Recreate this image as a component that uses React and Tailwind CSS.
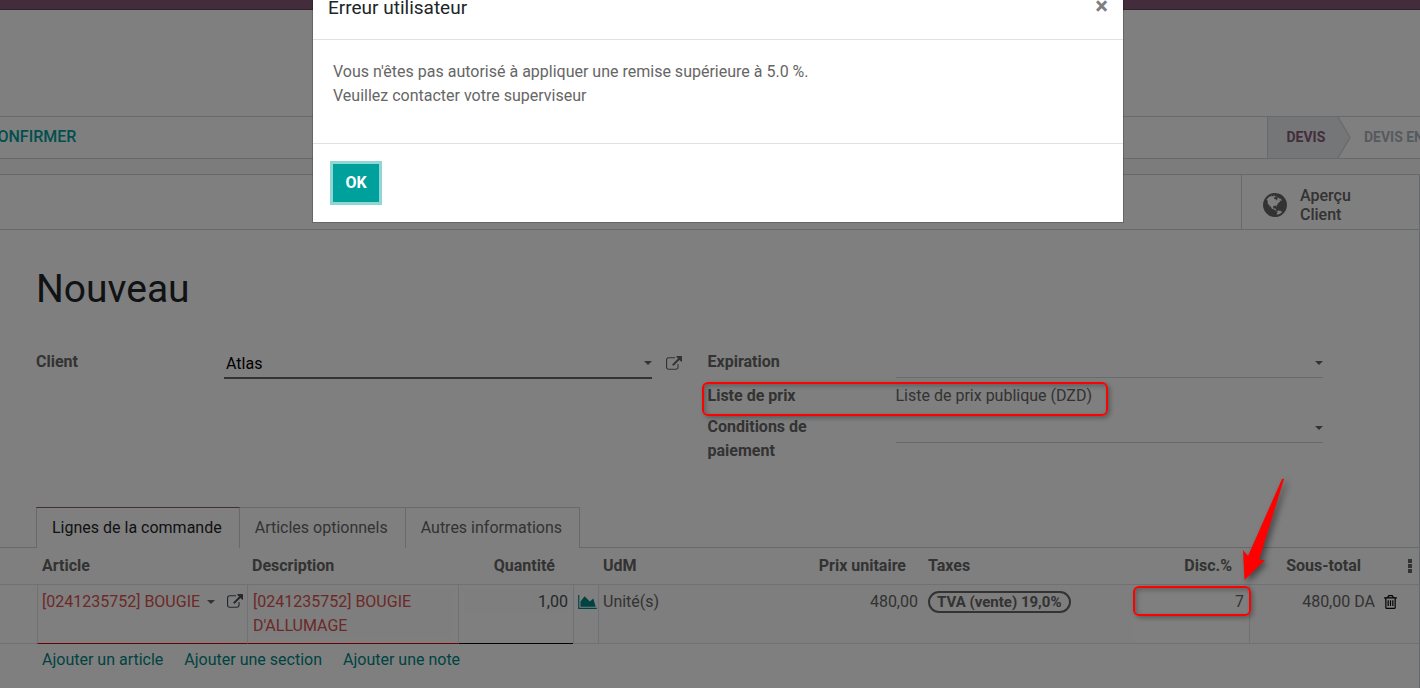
const GLOBE =
  'M896 128q209 0 385.5 103t279.5 279.5 103 385.5-103 385.5-279.5 279.5-385.5 103-385.5-103-279.5-279.5-103-385.5 103-385.5 279.5-279.5 385.5-103zm274 521q-2 1-9.5 9.5t-13.5 9.5q2 0 4.5-5t5-11 3.5-7q6-7 22-15 14-6 52-12 34-8 51 11-2-2 9.5-13t14.5-12q3-2 15-4.5t15-7.5l2-22q-12 1-17.5-7t-6.5-21q0 2-6 8 0-7-4.5-8t-11.5 1-9 1q-10-3-15-7.5t-8-16.5-4-15q-2-5-9.5-11t-9.5-10q-1-2-2.5-5.5t-3-6.5-4-5.5-5.5-2.5-7 5-7.5 10-4.5 5q-3-2-6-1.5t-4.5 1-4.5 3-5 3.5q-3 2-8.5 3t-8.5 2q15-5-1-11-10-4-16-3 9-4 7.5-12t-8.5-14h5q-1-4-8.5-8.5t-17.5-8.5-13-6q-8-5-34-9.5t-33-.5q-5 6-4.5 10.5t4 14 3.5 12.5q1 6-5.5 13t-6.5 12q0 7 14 15.5t10 21.5q-3 8-16 16t-16 12q-5 8-1.5 18.5t10.5 16.5q2 2 1.5 4t-3.5 4.5-5.5 4-6.5 3.5l-3 2q-11 5-20.5-6t-13.5-26q-7-25-16-30-23-8-29 1-5-13-41-26-25-9-58-4 6-1 0-15-7-15-19-12 3-6 4-17.5t1-13.5q3-13 12-23 1-1 7-8.5t9.5-13.5.5-6q35 4 50-11 5-5 11.5-17t10.5-17q9-6 14-5.5t14.5 5.5 14.5 5q14 1 15.5-11t-7.5-20q12 1 3-17-4-7-8-9-12-4-27 5-8 4 2 8-1-1-9.5 10.5t-16.5 17.5-16-5q-1-1-5.5-13.5t-9.5-13.5q-8 0-16 15 3-8-11-15t-24-8q19-12-8-27-7-4-20.5-5t-19.5 4q-5 7-5.5 11.5t5 8 10.5 5.5 11.5 4 8.5 3q14 10 8 14-2 1-8.5 3.5t-11.5 4.5-6 4q-3 4 0 14t-2 14q-5-5-9-17.5t-7-16.5q7 9-25 6l-10-1q-4 0-16 2t-20.5 1-13.5-8q-4-8 0-20 1-4 4-2-4-3-11-9.5t-10-8.5q-46 15-94 41 6 1 12-1 5-2 13-6.5t10-5.5q34-14 42-7l5-5q14 16 20 25-7-4-30-1-20 6-22 12 7 12 5 18-4-3-11.5-10t-14.5-11-15-5q-16 0-22 1-146 80-235 222 7 7 12 8 4 1 5 9t2.5 11 11.5-3q9 8 3 19 1-1 44 27 19 17 21 21 3 11-10 18-1-2-9-9t-9-4q-3 5 .5 18.5t10.5 12.5q-7 0-9.5 16t-2.5 35.5-1 23.5l2 1q-3 12 5.5 34.5t21.5 19.5q-13 3 20 43 6 8 8 9 3 2 12 7.5t15 10 10 10.5q4 5 10 22.5t14 23.5q-2 6 9.5 20t10.5 23q-1 0-2.5 1t-2.5 1q3 7 15.5 14t15.5 13q1 3 2 10t3 11 8 2q2-20-24-62-15-25-17-29-3-5-5.5-15.5t-4.5-14.5q2 0 6 1.5t8.5 3.5 7.5 4 2 3q-3 7 2 17.5t12 18.5 17 19 12 13q6 6 14 19.5t0 13.5q9 0 20 10.5t17 19.5q5 8 8 26t5 24q2 7 8.5 13.5t12.5 9.5l16 8 13 7q5 2 18.5 10.5t21.5 11.5q10 4 16 4t14.5-2.5 13.5-3.5q15-2 29 15t21 21q36 19 55 11-2 1 .5 7.5t8 15.5 9 14.5 5.5 8.5q5 6 18 15t18 15q6-4 7-9-3 8 7 20t18 10q14-3 14-32-31 15-49-18 0-1-2.5-5.5t-4-8.5-2.5-8.5 0-7.5 5-3q9 0 10-3.5t-2-12.5-4-13q-1-8-11-20t-12-15q-5 9-16 8t-16-9q0 1-1.5 5.5t-1.5 6.5q-13 0-15-1 1-3 2.5-17.5t3.5-22.5q1-4 5.5-12t7.5-14.5 4-12.5-4.5-9.5-17.5-2.5q-19 1-26 20-1 3-3 10.5t-5 11.5-9 7q-7 3-24 2t-24-5q-13-8-22.5-29t-9.5-37q0-10 2.5-26.5t3-25-5.5-24.5q3-2 9-9.5t10-10.5q2-1 4.5-1.5t4.5 0 4-1.5 3-6q-1-1-4-3-3-3-4-3 7 3 28.5-1.5t27.5 1.5q15 11 22-2 0-1-2.5-9.5t-.5-13.5q5 27 29 9 3 3 15.5 5t17.5 5q3 2 7 5.5t5.5 4.5 5-.5 8.5-6.5q10 14 12 24 11 40 19 44 7 3 11 2t4.5-9.5 0-14-1.5-12.5l-1-8v-18l-1-8q-15-3-18.5-12t1.5-18.5 15-18.5q1-1 8-3.5t15.5-6.5 12.5-8q21-19 15-35 7 0 11-9-1 0-5-3t-7.5-5-4.5-2q9-5 2-16 5-3 7.5-11t7.5-10q9 12 21 2 7-8 1-16 5-7 20.5-10.5t18.5-9.5q7 2 8-2t1-12 3-12q4-5 15-9t13-5l17-11q3-4 0-4 18 2 31-11 10-11-6-20 3-6-3-9.5t-15-5.5q3-1 11.5-.5t10.5-1.5q15-10-7-16-17-5-43 12zm-163 877q206-36 351-189-3-3-12.5-4.5t-12.5-3.5q-18-7-24-8 1-7-2.5-13t-8-9-12.5-8-11-7q-2-2-7-6t-7-5.5-7.5-4.5-8.5-2-10 1l-3 1q-3 1-5.5 2.5t-5.5 3-4 3 0 2.5q-21-17-36-22-5-1-11-5.5t-10.5-7-10-1.5-11.5 7q-5 5-6 15t-2 13q-7-5 0-17.5t2-18.5q-3-6-10.5-4.5t-12 4.5-11.5 8.5-9 6.5-8.5 5.5-8.5 7.5q-3 4-6 12t-5 11q-2-4-11.5-6.5t-9.5-5.5q2 10 4 35t5 38q7 31-12 48-27 25-29 40-4 22 12 26 0 7-8 20.5t-7 21.5q0 6 2 16z';

const EXTERNAL =
  'M1408 928v320q0 119-84.5 203.5t-203.5 84.5h-832q-119 0-203.5-84.5t-84.5-203.5v-832q0-119 84.5-203.5t203.5-84.5h704q14 0 23 9t9 23v64q0 14-9 23t-23 9h-704q-66 0-113 47t-47 113v832q0 66 47 113t113 47h832q66 0 113-47t47-113v-320q0-14 9-23t23-9h64q14 0 23 9t9 23zm384-864v512q0 26-19 45t-45 19-45-19l-176-176-652 652q-10 10-23 10t-23-10l-114-114q-10-10-10-23t10-23l652-652-176-176q-19-19-19-45t19-45 45-19h512q26 0 45 19t19 45z';

const TRASH =
  'M704 736v576q0 14-9 23t-23 9h-64q-14 0-23-9t-9-23v-576q0-14 9-23t23-9h64q14 0 23 9t9 23zm256 0v576q0 14-9 23t-23 9h-64q-14 0-23-9t-9-23v-576q0-14 9-23t23-9h64q14 0 23 9t9 23zm256 0v576q0 14-9 23t-23 9h-64q-14 0-23-9t-9-23v-576q0-14 9-23t23-9h64q14 0 23 9t9 23zm128 724v-948h-896v948q0 22 7 40.5t14.5 27 10.5 8.5h832q3 0 10.5-8.5t14.5-27 7-40.5zm-672-1076h448l-48-117q-7-9-17-11h-317q-10 2-17 11zm928 32v64q0 14-9 23t-23 9h-96v948q0 83-47 143.5t-113 60.5h-832q-66 0-113-58.5t-47-141.5v-952h-96q-14 0-23-9t-9-23v-64q0-14 9-23t23-9h309l70-167q15-37 54-63t79-26h320q40 0 79 26t54 63l70 167h309q14 0 23 9t9 23z';

function ExternalLinkIcon() {
  return (
    <svg viewBox="0 0 1792 1664" className="h-[15px] w-4 fill-current" aria-hidden="true">
      <path d={EXTERNAL} />
    </svg>
  );
}

function Caret() {
  return (
    <svg viewBox="0 0 8 4" className="h-1 w-2 shrink-0 fill-[#666]" aria-hidden="true">
      <path d="M0 0h8L4 4z" />
    </svg>
  );
}

function Highlight({ className }) {
  return (
    <span
      aria-hidden="true"
      className={`pointer-events-none absolute z-20 rounded-md border-2 border-[#ff0000] shadow-[2px_2px_5px_rgba(0,0,0,0.3),inset_2px_2px_5px_rgba(0,0,0,0.25)] ${className}`}
    />
  );
}

function StatusBar() {
  return (
    <div className="flex h-[43px] items-stretch justify-between overflow-hidden border-y border-[#ced4da] bg-white">
      <button type="button" className="-ml-[13px] pb-[2px] font-medium text-[#00a09d]">
        CONFIRMER
      </button>
      <div className="-mr-1 flex text-sm">
        <button type="button" className="relative w-[71px] border-l border-[#ced4da] bg-[#e9ecef] pr-[6px] pb-[2px] pl-3 font-bold text-[#875a7b]">
          DEVIS
          <svg viewBox="0 0 13 41" className="absolute top-0 left-full h-full w-[13px]" aria-hidden="true">
            <path d="M0 0L12 20.500 0 41z" fill="#e9ecef" />
            <path d="M0 0L12 20.500 0 41" fill="none" stroke="#d5d9dd" strokeWidth="1.500" />
          </svg>
        </button>
        <button type="button" className="pb-[2px] pl-[26px] font-bold whitespace-nowrap text-[#adb5bd]">
          DEVIS EN
        </button>
      </div>
    </div>
  );
}

const labelClass = 'w-[188px] shrink-0 pt-px pr-12 font-bold text-[#666]';

function FieldGroups() {
  return (
    <div className="mt-[37px] grid grid-cols-2 pr-10 pl-9">
      <div>
        <div className="flex">
          <label htmlFor="client" className={labelClass}>
            Client
          </label>
          <div className="flex flex-1 items-center border-b-2 border-[#666] pl-[2px]">
            <input id="client" defaultValue="Atlas" className="h-7 w-full min-w-0 bg-transparent text-black outline-none" />
            <Caret />
          </div>
          <button type="button" aria-label="Ouvrir le client" className="flex h-7 w-14 items-center pl-[14px] text-[#666]">
            <ExternalLinkIcon />
          </button>
        </div>
      </div>
      <div>
        <div className="mr-14 flex">
          <label htmlFor="expiration" className={labelClass}>
            Expiration
          </label>
          <div className="flex flex-1 items-center border-b border-[#ced4da]">
            <input id="expiration" className="h-7 w-full min-w-0 bg-transparent outline-none" />
            <Caret />
          </div>
        </div>
        <div className="relative mt-[5px] mr-14 flex pb-px">
          <span className={labelClass}>Liste de prix</span>
          <span className="pt-px text-[#666]">Liste de prix publique (DZD)</span>
          <Highlight className="-top-px -left-[6px] h-[34px] w-[406px]" />
        </div>
        <div className="mt-[5px] mr-14 flex items-start">
          <label htmlFor="conditions" className={labelClass}>
            Conditions de paiement
          </label>
          <div className="flex flex-1 items-center border-b border-[#ced4da]">
            <input id="conditions" className="h-7 w-full min-w-0 bg-transparent outline-none" />
            <Caret />
          </div>
        </div>
      </div>
    </div>
  );
}

function Tabs() {
  return (
    <div role="tablist" className="mt-11 flex">
      <div className="w-9 border-b border-[#ced4da]" />
      <button
        type="button"
        role="tab"
        aria-selected="true"
        className="h-[41px] border-x border-t border-x-[#ced4da] border-t-[#875a7b] pr-[17px] pl-[15px] text-[#1f2429]"
      >
        Lignes de la commande
      </button>
      <button type="button" role="tab" aria-selected="false" className="h-[41px] border-t border-r border-[#ced4da] pr-[17px] pl-[15px] text-[#666]">
        Articles optionnels
      </button>
      <button type="button" role="tab" aria-selected="false" className="h-[41px] border-t border-r border-[#ced4da] pr-[17px] pl-[15px] text-[#666]">
        Autres informations
      </button>
      <div className="flex-1 border-b border-[#ced4da]" />
    </div>
  );
}

function OrderLines() {
  return (
    <table className="w-full table-fixed border-separate border-spacing-0 text-[#666]">
      <colgroup>
        <col className="w-[37px]" />
        <col className="w-[210px]" />
        <col className="w-[211px]" />
        <col className="w-[115px]" />
        <col className="w-[25px]" />
        <col />
        <col className="w-[125px]" />
        <col className="w-[210px]" />
        <col className="w-[117px]" />
        <col className="w-[129px]" />
        <col className="w-[22px]" />
        <col className="w-[18px]" />
      </colgroup>
      <thead>
        <tr className="h-[37px] text-left [&>*]:border-b [&>*]:border-[#dee2e6]">
          <td />
          <th className="px-[5px]">Article</th>
          <th className="px-[5px]">Description</th>
          <th className="pr-[18px] text-right">Quantité</th>
          <td />
          <th className="px-[5px]">UdM</th>
          <th className="pr-[17px] text-right whitespace-nowrap">Prix unitaire</th>
          <th className="px-[5px]">Taxes</th>
          <th className="pr-[18px] text-right">Disc.%</th>
          <th className="pr-[18px] text-right">Sous-total</th>
          <td />
          <th>
            <button type="button" aria-label="Colonnes optionnelles" className="flex w-full justify-center">
              <svg viewBox="0 0 4 14" className="h-[14px] w-1 fill-[#666]" aria-hidden="true">
                <path d="M0 0h4v4H0zM0 5h4v4H0zM0 10h4v4H0z" />
              </svg>
            </button>
          </th>
        </tr>
      </thead>
      <tbody>
        <tr className="h-[59px] align-top [&>td]:border-b [&>td]:border-b-[#dee2e6] [&>td]:pt-[5px]">
          <td />
          <td className="border-l border-l-[#dee2e6] px-1 !border-b-[#d00000]">
            <div className="flex items-center text-[#d9534f]">
              <input
                aria-label="Article"
                defaultValue="[0241235752] BOUGIE"
                className="h-6 w-[165px] min-w-0 bg-transparent outline-none"
              />
              <Caret />
              <button type="button" aria-label="Ouvrir l'article" className="ml-3 pb-[2px] text-[#495057]">
                <ExternalLinkIcon />
              </button>
            </div>
          </td>
          <td className="border-l border-l-[#dee2e6] px-[5px] !border-b-[#d00000]">
            <textarea
              aria-label="Description"
              rows={2}
              defaultValue={"[0241235752] BOUGIE\nD'ALLUMAGE"}
              className="block h-12 w-full resize-none overflow-hidden bg-[#fcfcfc] text-[#d9534f] outline-none"
            />
          </td>
          <td className="border-l border-l-[#dee2e6] px-[5px] !border-b-black">
            <input
              aria-label="Quantité"
              defaultValue="1,00"
              className="h-6 w-full bg-[#fcfcfc] text-right text-[#495057] outline-none"
            />
          </td>
          <td className="border-l border-l-[#dee2e6]">
            <button type="button" aria-label="Prévisions" className="flex h-6 items-center pl-1">
              <svg viewBox="0 128 2048 1536" className="h-[14px] w-[19px] fill-[#008784]" aria-hidden="true">
                <path d="M2048 1536v128h-2048v-1536h128v1408h1920zm-384-1024l256 896h-1664v-576l448-576 576 576z" />
              </svg>
            </button>
          </td>
          <td className="border-l border-l-[#dee2e6] bg-[#fcfcfc] px-1">Unité(s)</td>
          <td className="bg-[#fcfcfc] px-[5px] text-right">480,00</td>
          <td className="bg-[#fcfcfc] px-[5px]">
            <span className="mt-px inline-flex h-[22px] items-center rounded-full border-2 border-[#666] px-[7px] text-[15px] font-bold whitespace-nowrap">
              TVA (vente) 19,0%
            </span>
          </td>
          <td className="relative border-r border-r-[#dee2e6] px-[5px]">
            <input aria-label="Remise" defaultValue="7" className="h-6 w-full bg-transparent text-right outline-none" />
            <Highlight className="top-px -right-[2px] h-[30px] w-[118px]" />
            <svg
              viewBox="0 0 40 110"
              className="pointer-events-none absolute -right-9 bottom-[58px] z-20 h-[110px] w-10 overflow-visible drop-shadow-[3px_3px_3px_rgba(0,0,0,0.45)]"
              aria-hidden="true"
            >
              <path d="M-0.500 105L-2 75l5 6L37 4q1-1 2 0L14 85h6z" fill="#ff0000" />
            </svg>
          </td>
          <td className="bg-[#fcfcfc] pr-1 text-right">480,00 DA</td>
          <td className="bg-[#fcfcfc]">
            <button type="button" aria-label="Supprimer la ligne" className="flex h-6 items-center pl-[5px]">
              <svg viewBox="192 128 1408 1536" className="h-[14px] w-[13px] fill-black" aria-hidden="true">
                <path d={TRASH} />
              </svg>
            </button>
          </td>
          <td className="bg-[#fcfcfc]" />
        </tr>
      </tbody>
    </table>
  );
}

function ErrorDialog() {
  return (
    <div className="fixed inset-0 z-30 flex items-start justify-center overflow-hidden pl-4">
      <div
        role="dialog"
        aria-modal="true"
        aria-labelledby="dialog-title"
        className="-mt-6 w-full max-w-[812px] border border-black/20 bg-white bg-clip-padding"
      >
        <div className="flex items-center justify-between border-b border-[#dee2e6] px-[15px] py-4">
          <h2 id="dialog-title" className="text-[19px] leading-[30px] text-[#212529]">
            Erreur utilisateur
          </h2>
          <button type="button" aria-label="Fermer" className="pb-1 text-2xl leading-6 font-bold text-[#7f7f7f]">
            ×
          </button>
        </div>
        <div className="px-5 pt-5 pb-[35px] text-[#666]">
          <p>Vous n'êtes pas autorisé à appliquer une remise supérieure à 5.0 %.</p>
          <p>Veuillez contacter votre superviseur</p>
        </div>
        <div className="border-t border-[#dee2e6] px-5 py-5">
          <button type="button" className="h-[38px] min-w-[46px] bg-[#00a09d] font-bold text-white ring-3 ring-[#8fd6d5]">
            OK
          </button>
        </div>
      </div>
    </div>
  );
}

export default function App() {
  return (
    <div className="flex min-h-screen flex-col overflow-hidden bg-white font-[Roboto,sans-serif] text-base leading-6">
      <header className="h-[10px] border-b border-[#68465f] bg-[#875a7b]" />
      <div className="h-[106px]" />
      <StatusBar />
      <main className="flex flex-1 flex-col bg-[#f9f9f9] pt-[15px]">
        <section className="flex-1 border-t border-r border-[#ced4da] bg-white">
          <div className="flex justify-end border-b border-[#ced4da]">
            <button
              type="button"
              className="flex h-[54px] w-[178px] items-center gap-[13px] border-l border-[#ced4da] pt-[5px] pl-[21px] text-left leading-[19px] font-medium text-[#666]"
            >
              <svg viewBox="128 128 1536 1536" className="h-6 w-6 fill-[#666]" aria-hidden="true">
                <path d={GLOBE} />
              </svg>
              <span>
                Aperçu
                <br />
                Client
              </span>
            </button>
          </div>
          <h1 className="mt-9 pl-9 text-[39px] leading-[46px] text-[#212529]">Nouveau</h1>
          <FieldGroups />
          <Tabs />
          <OrderLines />
          <nav className="flex gap-[21px] py-1 pl-[42px] text-[#008784]">
            <a href="#article">Ajouter un article</a>
            <a href="#section">Ajouter une section</a>
            <a href="#note">Ajouter une note</a>
          </nav>
        </section>
      </main>
      <div className="fixed inset-0 z-10 bg-black/50" />
      <ErrorDialog />
    </div>
  );
}
